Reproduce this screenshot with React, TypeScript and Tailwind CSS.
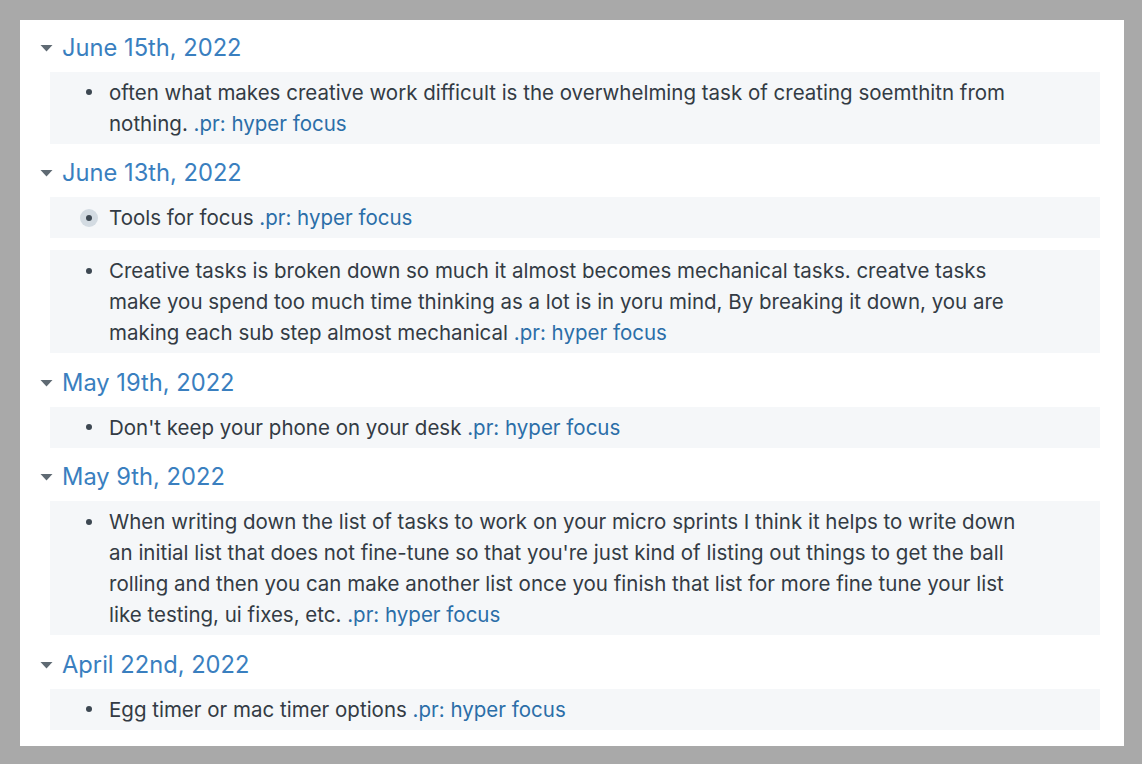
import React from 'react';

type Block = { text: string; focused?: boolean };
type Day = { date: string; blocks: Block[] };

const DAYS: Day[] = [
  {
    date: 'June 15th, 2022',
    blocks: [
      { text: 'often what makes creative work difficult is the overwhelming task of creating soemthitn from nothing.' },
    ],
  },
  {
    date: 'June 13th, 2022',
    blocks: [
      { text: 'Tools for focus', focused: true },
      {
        text: 'Creative tasks is broken down so much it almost becomes mechanical tasks. creatve tasks make you spend too much time thinking as a lot is in yoru mind, By breaking it down, you are making each sub step almost mechanical',
      },
    ],
  },
  {
    date: 'May 19th, 2022',
    blocks: [{ text: "Don't keep your phone on your desk" }],
  },
  {
    date: 'May 9th, 2022',
    blocks: [
      {
        text: "When writing down the list of tasks to work on your micro sprints I think it helps to write down an initial list that does not fine-tune so that you're just kind of listing out things to get the ball rolling and then you can make another list once you finish that list for more fine tune your list like testing, ui fixes, etc.",
      },
    ],
  },
  {
    date: 'April 22nd, 2022',
    blocks: [{ text: 'Egg timer or mac timer options' }],
  },
];

// collapse toggle next to each date
const Caret = () => (
  <svg width="13" height="8" viewBox="0 0 13 8" className="shrink-0">
    <path d="M0.5 1 L12.5 1 L6.5 7.5 Z" fill="#5f6a73" />
  </svg>
);

const BlockRow: React.FC<{ block: Block }> = ({ block }) => (
  <div className="ml-[30px] mr-[24px] bg-[#f5f7f9] py-[5px] pl-[30px] pr-[60px] flex">
    <div className="w-[29px] h-[31px] shrink-0 flex items-center">
      <span
        className={
          block.focused
            ? 'w-[18px] h-[18px] rounded-full bg-[#d3dbe2] flex items-center justify-center'
            : 'w-[18px] h-[18px] flex items-center justify-center'
        }
      >
        <span className="w-[6px] h-[6px] rounded-full bg-[#3d4852]" />
      </span>
    </div>
    <p className="text-[20.5px] leading-[31px] text-[#333b44]">
      {block.text}{' '}
      <span className="text-[#2b6ea8]">.pr: hyper focus</span>
    </p>
  </div>
);

export default function App() {
  return (
    <div className="min-h-screen bg-[#a9a9a9] p-[20px] pr-[18px]" style={{ fontFamily: 'Inter, "Noto Sans", sans-serif' }}>
      <div className="bg-white w-[1104px] h-[726px] pt-[10px] flex flex-col gap-[12px]">
        {DAYS.map((day) => (
          <div key={day.date} className="flex flex-col gap-[12px]">
            <div className="flex flex-col gap-[6px]">
              <div className="h-[35.5px] flex items-center pl-[20px] gap-[9px]">
                <Caret />
                <span className="text-[23.7px] text-[#3a7fbf]">{day.date}</span>
              </div>
              <BlockRow block={day.blocks[0]} />
            </div>
            {day.blocks.slice(1).map((b) => (
              <BlockRow key={b.text} block={b} />
            ))}
          </div>
        ))}
      </div>
    </div>
  );
}
